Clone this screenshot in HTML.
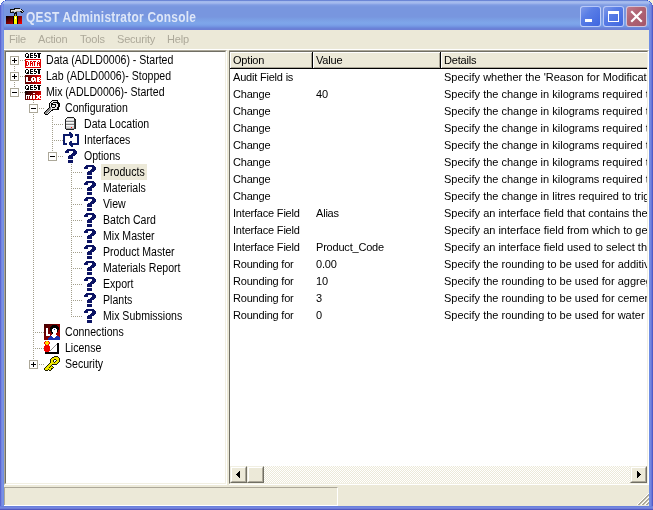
<!DOCTYPE html>
<html><head><meta charset="utf-8"><style>
html,body{margin:0;padding:0;width:653px;height:510px;overflow:hidden;background:#fff;position:relative}
.t{position:absolute;font-family:"Liberation Sans", sans-serif;font-size:11px;letter-spacing:-0.2px;white-space:nowrap;color:#000;line-height:16px}
</style></head><body><div style="position:absolute;left:0;top:0;width:653px;height:510px;will-change:transform">
<div style="position:absolute;left:0px;top:26px;width:4px;height:484px;background:linear-gradient(to right,#5a66d2 0,#5a66d2 1px,#7484e0 1px,#7484e0 2px,#7a90e3 2px,#7a90e3 3px,#6e8de5 3px,#6e8de5 4px)"></div>
<div style="position:absolute;left:649px;top:26px;width:4px;height:484px;background:linear-gradient(to left,#4f5cc8 0,#4f5cc8 1px,#6a78d8 1px,#6a78d8 2px,#7488e0 2px,#7488e0 3px,#6e8de5 3px,#6e8de5 4px)"></div>
<div style="position:absolute;left:0px;top:506px;width:653px;height:4px;background:linear-gradient(to top,#5058c0 0,#5058c0 1px,#6f7dd8 1px,#6f7dd8 2px,#7487e0 2px,#7487e0 3px,#6a80dc 3px,#6a80dc 4px)"></div>
<div style="position:absolute;left:0;top:0;width:653px;height:30px;background:linear-gradient(to bottom,#6b86d6 0,#6b86d6 1px,#a0b7ec 1px,#a6bcee 3px,#90a9e8 4px,#809de3 5px,#7896df 7px,#7896df 17px,#7a9de3 19px,#7ea6ea 23px,#7aa0e8 25px,#7090e0 27px,#6a84d8 28px,#6c7cd4 30px);overflow:hidden"><div style="position:absolute;left:0;top:0;width:4px;height:30px;background:linear-gradient(to right,rgba(80,90,200,.5),rgba(80,90,200,0))"></div><div style="position:absolute;right:0;top:0;width:4px;height:30px;background:linear-gradient(to left,rgba(70,80,190,.6),rgba(70,80,190,0))"></div></div>
<div style="position:absolute;left:0px;top:4px;width:4px;height:26px;background:linear-gradient(to right,#5a66d2 0,#5a66d2 1px,#7484e0 1px,#7484e0 2px,#7a90e3 2px,#7a90e3 3px,#6e8de5 3px,#6e8de5 4px)"></div>
<div style="position:absolute;left:649px;top:4px;width:4px;height:26px;background:linear-gradient(to left,#4f5cc8 0,#4f5cc8 1px,#6a78d8 1px,#6a78d8 2px,#7488e0 2px,#7488e0 3px,#6e8de5 3px,#6e8de5 4px)"></div>
<div style="position:absolute;left:0px;top:0px;width:5px;height:1px;background:#fff"></div>
<div style="position:absolute;left:648px;top:0px;width:5px;height:1px;background:#f2efdc"></div>
<div style="position:absolute;left:0px;top:1px;width:3px;height:1px;background:#fff"></div>
<div style="position:absolute;left:650px;top:1px;width:3px;height:1px;background:#f2efdc"></div>
<div style="position:absolute;left:0px;top:2px;width:2px;height:1px;background:#fff"></div>
<div style="position:absolute;left:651px;top:2px;width:2px;height:1px;background:#f2efdc"></div>
<div style="position:absolute;left:0px;top:3px;width:1px;height:1px;background:#fff"></div>
<div style="position:absolute;left:652px;top:3px;width:1px;height:1px;background:#f2efdc"></div>
<div style="position:absolute;left:0px;top:4px;width:1px;height:1px;background:#fff"></div>
<div style="position:absolute;left:652px;top:4px;width:1px;height:1px;background:#f2efdc"></div>
<div style="position:absolute;left:5px;top:0px;width:1px;height:1px;background:#3050d0"></div>
<div style="position:absolute;left:3px;top:1px;width:1px;height:1px;background:#3a58d8"></div>
<div style="position:absolute;left:2px;top:2px;width:1px;height:1px;background:#4a64d8"></div>
<div style="position:absolute;left:1px;top:3px;width:1px;height:1px;background:#4a64d8"></div>
<div style="position:absolute;left:647px;top:0px;width:1px;height:1px;background:#3050d0"></div>
<div style="position:absolute;left:649px;top:1px;width:1px;height:1px;background:#3a58d8"></div>
<div style="position:absolute;left:650px;top:2px;width:1px;height:1px;background:#4a64d8"></div>
<div style="position:absolute;left:651px;top:3px;width:1px;height:1px;background:#4a64d8"></div>
<svg style="position:absolute;left:0;top:0" width="32" height="30" viewBox="0 0 32 30" shape-rendering="crispEdges"><defs><linearGradient id="tb" x1="0" y1="0" x2="1" y2="1"><stop offset="0" stop-color="#000000"/><stop offset="0.5" stop-color="#800000"/><stop offset="1" stop-color="#ff0000"/></linearGradient></defs><rect x="6" y="16" width="16" height="8" fill="url(#tb)"/><rect x="13" y="16" width="5" height="8" fill="#000"/><rect x="14" y="16" width="3" height="8" fill="#ffff00"/><rect x="15" y="17" width="1" height="2" fill="#fff"/><g fill="#101010"><rect x="14" y="8" width="6" height="1"/><rect x="10" y="9" width="5" height="1"/><rect x="21" y="9" width="1" height="1"/><rect x="10" y="10" width="1" height="1"/><rect x="22" y="10" width="1" height="1"/><rect x="10" y="11" width="1" height="1"/><rect x="20" y="11" width="2" height="1"/><rect x="23" y="11" width="1" height="1"/><rect x="10" y="12" width="4" height="1"/><rect x="15" y="12" width="2" height="1"/><rect x="21" y="12" width="2" height="1"/><rect x="14" y="13" width="3" height="1"/><rect x="14" y="14" width="1" height="1"/><rect x="16" y="14" width="1" height="1"/><rect x="14" y="15" width="1" height="1"/><rect x="16" y="15" width="1" height="1"/></g><g fill="#e0e0e0"><rect x="15" y="9" width="6" height="1"/><rect x="11" y="10" width="11" height="1"/><rect x="11" y="11" width="1" height="1"/><rect x="14" y="11" width="2" height="1"/><rect x="22" y="11" width="1" height="1"/></g><g fill="#909090"><rect x="12" y="11" width="2" height="1"/><rect x="16" y="11" width="4" height="1"/><rect x="15" y="14" width="1" height="1"/><rect x="15" y="15" width="1" height="1"/></g></svg>
<div class="t" style="left:26px;top:8px;font-weight:bold;font-size:14px;letter-spacing:0.3px;color:#dde6f8;line-height:18px;transform:scaleX(0.85);transform-origin:0 0">QEST Administrator Console</div>
<div style="position:absolute;left:580px;top:6px;width:19px;height:19px;border:1px solid rgba(220,230,255,.75);border-radius:3px;background:linear-gradient(135deg,#7f9ae8 0,#5a7ee6 35%,#3f66e0 100%)"></div>
<div style="position:absolute;left:603px;top:6px;width:19px;height:19px;border:1px solid rgba(220,230,255,.75);border-radius:3px;background:linear-gradient(135deg,#7f9ae8 0,#5a7ee6 35%,#3f66e0 100%)"></div>
<div style="position:absolute;left:626px;top:6px;width:19px;height:19px;border:1px solid rgba(220,230,255,.75);border-radius:3px;background:linear-gradient(135deg,#c07a8c 0,#b06474 40%,#a4566a 100%)"></div>
<div style="position:absolute;left:585px;top:19px;width:7px;height:3px;background:#fff"></div>
<div style="position:absolute;left:608px;top:11px;width:9px;height:7px;border:1px solid #fff;border-top-width:3px;"></div>
<svg style="position:absolute;left:626px;top:6px" width="21" height="21"><path d="M6 6 L15 15 M15 6 L6 15" stroke="#fff" stroke-width="2.2" stroke-linecap="square"/></svg>
<div style="position:absolute;left:4px;top:30px;width:645px;height:476px;background:#ece9d8"></div>
<div class="t" style="left:9px;top:33px;color:#aca899;line-height:13px">File</div>
<div class="t" style="left:38px;top:33px;color:#aca899;line-height:13px">Action</div>
<div class="t" style="left:80px;top:33px;color:#aca899;line-height:13px">Tools</div>
<div class="t" style="left:117px;top:33px;color:#aca899;line-height:13px">Security</div>
<div class="t" style="left:167px;top:33px;color:#aca899;line-height:13px">Help</div>
<div style="position:absolute;left:4px;top:49px;width:645px;height:1px;background:#fff"></div>
<div style="position:absolute;left:4px;top:50px;width:221px;height:433px;border:1px solid;border-color:#aca899 #fff #fff #aca899;"><div style="position:absolute;left:0;top:0;width:219px;height:431px;border:1px solid;border-color:#716f64 #f1efe2 #f1efe2 #716f64;background:#fff;overflow:hidden"></div></div>
<div style="position:absolute;left:228px;top:50px;width:419px;height:433px;border:1px solid;border-color:#aca899 #fff #fff #aca899;"><div style="position:absolute;left:0;top:0;width:417px;height:431px;border:1px solid;border-color:#716f64 #f1efe2 #f1efe2 #716f64;background:#fff;overflow:hidden"></div></div>
<div style="position:absolute;left:228px;top:50px;width:1px;height:435px;background:#ece9d8"></div>
<svg style="position:absolute;left:0;top:0" width="653" height="510" shape-rendering="crispEdges"><g fill="#a39f8c"><rect x="20" y="60" width="1" height="1"/><rect x="22" y="60" width="1" height="1"/><rect x="24" y="60" width="1" height="1"/><rect x="14" y="66" width="1" height="1"/><rect x="20" y="76" width="1" height="1"/><rect x="22" y="76" width="1" height="1"/><rect x="24" y="76" width="1" height="1"/><rect x="14" y="68" width="1" height="1"/><rect x="14" y="70" width="1" height="1"/><rect x="14" y="82" width="1" height="1"/><rect x="20" y="92" width="1" height="1"/><rect x="22" y="92" width="1" height="1"/><rect x="24" y="92" width="1" height="1"/><rect x="14" y="84" width="1" height="1"/><rect x="14" y="86" width="1" height="1"/><rect x="39" y="108" width="1" height="1"/><rect x="41" y="108" width="1" height="1"/><rect x="43" y="108" width="1" height="1"/><rect x="33" y="100" width="1" height="1"/><rect x="33" y="102" width="1" height="1"/><rect x="33" y="114" width="1" height="1"/><rect x="54" y="124" width="1" height="1"/><rect x="56" y="124" width="1" height="1"/><rect x="58" y="124" width="1" height="1"/><rect x="60" y="124" width="1" height="1"/><rect x="62" y="124" width="1" height="1"/><rect x="52" y="116" width="1" height="1"/><rect x="52" y="118" width="1" height="1"/><rect x="52" y="120" width="1" height="1"/><rect x="52" y="122" width="1" height="1"/><rect x="52" y="124" width="1" height="1"/><rect x="52" y="126" width="1" height="1"/><rect x="52" y="128" width="1" height="1"/><rect x="52" y="130" width="1" height="1"/><rect x="33" y="116" width="1" height="1"/><rect x="33" y="118" width="1" height="1"/><rect x="33" y="120" width="1" height="1"/><rect x="33" y="122" width="1" height="1"/><rect x="33" y="124" width="1" height="1"/><rect x="33" y="126" width="1" height="1"/><rect x="33" y="128" width="1" height="1"/><rect x="33" y="130" width="1" height="1"/><rect x="54" y="140" width="1" height="1"/><rect x="56" y="140" width="1" height="1"/><rect x="58" y="140" width="1" height="1"/><rect x="60" y="140" width="1" height="1"/><rect x="62" y="140" width="1" height="1"/><rect x="52" y="132" width="1" height="1"/><rect x="52" y="134" width="1" height="1"/><rect x="52" y="136" width="1" height="1"/><rect x="52" y="138" width="1" height="1"/><rect x="52" y="140" width="1" height="1"/><rect x="52" y="142" width="1" height="1"/><rect x="52" y="144" width="1" height="1"/><rect x="52" y="146" width="1" height="1"/><rect x="33" y="132" width="1" height="1"/><rect x="33" y="134" width="1" height="1"/><rect x="33" y="136" width="1" height="1"/><rect x="33" y="138" width="1" height="1"/><rect x="33" y="140" width="1" height="1"/><rect x="33" y="142" width="1" height="1"/><rect x="33" y="144" width="1" height="1"/><rect x="33" y="146" width="1" height="1"/><rect x="58" y="156" width="1" height="1"/><rect x="60" y="156" width="1" height="1"/><rect x="62" y="156" width="1" height="1"/><rect x="52" y="148" width="1" height="1"/><rect x="52" y="150" width="1" height="1"/><rect x="33" y="148" width="1" height="1"/><rect x="33" y="150" width="1" height="1"/><rect x="33" y="152" width="1" height="1"/><rect x="33" y="154" width="1" height="1"/><rect x="33" y="156" width="1" height="1"/><rect x="33" y="158" width="1" height="1"/><rect x="33" y="160" width="1" height="1"/><rect x="33" y="162" width="1" height="1"/><rect x="73" y="172" width="1" height="1"/><rect x="75" y="172" width="1" height="1"/><rect x="77" y="172" width="1" height="1"/><rect x="79" y="172" width="1" height="1"/><rect x="81" y="172" width="1" height="1"/><rect x="71" y="164" width="1" height="1"/><rect x="71" y="166" width="1" height="1"/><rect x="71" y="168" width="1" height="1"/><rect x="71" y="170" width="1" height="1"/><rect x="71" y="172" width="1" height="1"/><rect x="71" y="174" width="1" height="1"/><rect x="71" y="176" width="1" height="1"/><rect x="71" y="178" width="1" height="1"/><rect x="33" y="164" width="1" height="1"/><rect x="33" y="166" width="1" height="1"/><rect x="33" y="168" width="1" height="1"/><rect x="33" y="170" width="1" height="1"/><rect x="33" y="172" width="1" height="1"/><rect x="33" y="174" width="1" height="1"/><rect x="33" y="176" width="1" height="1"/><rect x="33" y="178" width="1" height="1"/><rect x="73" y="188" width="1" height="1"/><rect x="75" y="188" width="1" height="1"/><rect x="77" y="188" width="1" height="1"/><rect x="79" y="188" width="1" height="1"/><rect x="81" y="188" width="1" height="1"/><rect x="71" y="180" width="1" height="1"/><rect x="71" y="182" width="1" height="1"/><rect x="71" y="184" width="1" height="1"/><rect x="71" y="186" width="1" height="1"/><rect x="71" y="188" width="1" height="1"/><rect x="71" y="190" width="1" height="1"/><rect x="71" y="192" width="1" height="1"/><rect x="71" y="194" width="1" height="1"/><rect x="33" y="180" width="1" height="1"/><rect x="33" y="182" width="1" height="1"/><rect x="33" y="184" width="1" height="1"/><rect x="33" y="186" width="1" height="1"/><rect x="33" y="188" width="1" height="1"/><rect x="33" y="190" width="1" height="1"/><rect x="33" y="192" width="1" height="1"/><rect x="33" y="194" width="1" height="1"/><rect x="73" y="204" width="1" height="1"/><rect x="75" y="204" width="1" height="1"/><rect x="77" y="204" width="1" height="1"/><rect x="79" y="204" width="1" height="1"/><rect x="81" y="204" width="1" height="1"/><rect x="71" y="196" width="1" height="1"/><rect x="71" y="198" width="1" height="1"/><rect x="71" y="200" width="1" height="1"/><rect x="71" y="202" width="1" height="1"/><rect x="71" y="204" width="1" height="1"/><rect x="71" y="206" width="1" height="1"/><rect x="71" y="208" width="1" height="1"/><rect x="71" y="210" width="1" height="1"/><rect x="33" y="196" width="1" height="1"/><rect x="33" y="198" width="1" height="1"/><rect x="33" y="200" width="1" height="1"/><rect x="33" y="202" width="1" height="1"/><rect x="33" y="204" width="1" height="1"/><rect x="33" y="206" width="1" height="1"/><rect x="33" y="208" width="1" height="1"/><rect x="33" y="210" width="1" height="1"/><rect x="73" y="220" width="1" height="1"/><rect x="75" y="220" width="1" height="1"/><rect x="77" y="220" width="1" height="1"/><rect x="79" y="220" width="1" height="1"/><rect x="81" y="220" width="1" height="1"/><rect x="71" y="212" width="1" height="1"/><rect x="71" y="214" width="1" height="1"/><rect x="71" y="216" width="1" height="1"/><rect x="71" y="218" width="1" height="1"/><rect x="71" y="220" width="1" height="1"/><rect x="71" y="222" width="1" height="1"/><rect x="71" y="224" width="1" height="1"/><rect x="71" y="226" width="1" height="1"/><rect x="33" y="212" width="1" height="1"/><rect x="33" y="214" width="1" height="1"/><rect x="33" y="216" width="1" height="1"/><rect x="33" y="218" width="1" height="1"/><rect x="33" y="220" width="1" height="1"/><rect x="33" y="222" width="1" height="1"/><rect x="33" y="224" width="1" height="1"/><rect x="33" y="226" width="1" height="1"/><rect x="73" y="236" width="1" height="1"/><rect x="75" y="236" width="1" height="1"/><rect x="77" y="236" width="1" height="1"/><rect x="79" y="236" width="1" height="1"/><rect x="81" y="236" width="1" height="1"/><rect x="71" y="228" width="1" height="1"/><rect x="71" y="230" width="1" height="1"/><rect x="71" y="232" width="1" height="1"/><rect x="71" y="234" width="1" height="1"/><rect x="71" y="236" width="1" height="1"/><rect x="71" y="238" width="1" height="1"/><rect x="71" y="240" width="1" height="1"/><rect x="71" y="242" width="1" height="1"/><rect x="33" y="228" width="1" height="1"/><rect x="33" y="230" width="1" height="1"/><rect x="33" y="232" width="1" height="1"/><rect x="33" y="234" width="1" height="1"/><rect x="33" y="236" width="1" height="1"/><rect x="33" y="238" width="1" height="1"/><rect x="33" y="240" width="1" height="1"/><rect x="33" y="242" width="1" height="1"/><rect x="73" y="252" width="1" height="1"/><rect x="75" y="252" width="1" height="1"/><rect x="77" y="252" width="1" height="1"/><rect x="79" y="252" width="1" height="1"/><rect x="81" y="252" width="1" height="1"/><rect x="71" y="244" width="1" height="1"/><rect x="71" y="246" width="1" height="1"/><rect x="71" y="248" width="1" height="1"/><rect x="71" y="250" width="1" height="1"/><rect x="71" y="252" width="1" height="1"/><rect x="71" y="254" width="1" height="1"/><rect x="71" y="256" width="1" height="1"/><rect x="71" y="258" width="1" height="1"/><rect x="33" y="244" width="1" height="1"/><rect x="33" y="246" width="1" height="1"/><rect x="33" y="248" width="1" height="1"/><rect x="33" y="250" width="1" height="1"/><rect x="33" y="252" width="1" height="1"/><rect x="33" y="254" width="1" height="1"/><rect x="33" y="256" width="1" height="1"/><rect x="33" y="258" width="1" height="1"/><rect x="73" y="268" width="1" height="1"/><rect x="75" y="268" width="1" height="1"/><rect x="77" y="268" width="1" height="1"/><rect x="79" y="268" width="1" height="1"/><rect x="81" y="268" width="1" height="1"/><rect x="71" y="260" width="1" height="1"/><rect x="71" y="262" width="1" height="1"/><rect x="71" y="264" width="1" height="1"/><rect x="71" y="266" width="1" height="1"/><rect x="71" y="268" width="1" height="1"/><rect x="71" y="270" width="1" height="1"/><rect x="71" y="272" width="1" height="1"/><rect x="71" y="274" width="1" height="1"/><rect x="33" y="260" width="1" height="1"/><rect x="33" y="262" width="1" height="1"/><rect x="33" y="264" width="1" height="1"/><rect x="33" y="266" width="1" height="1"/><rect x="33" y="268" width="1" height="1"/><rect x="33" y="270" width="1" height="1"/><rect x="33" y="272" width="1" height="1"/><rect x="33" y="274" width="1" height="1"/><rect x="73" y="284" width="1" height="1"/><rect x="75" y="284" width="1" height="1"/><rect x="77" y="284" width="1" height="1"/><rect x="79" y="284" width="1" height="1"/><rect x="81" y="284" width="1" height="1"/><rect x="71" y="276" width="1" height="1"/><rect x="71" y="278" width="1" height="1"/><rect x="71" y="280" width="1" height="1"/><rect x="71" y="282" width="1" height="1"/><rect x="71" y="284" width="1" height="1"/><rect x="71" y="286" width="1" height="1"/><rect x="71" y="288" width="1" height="1"/><rect x="71" y="290" width="1" height="1"/><rect x="33" y="276" width="1" height="1"/><rect x="33" y="278" width="1" height="1"/><rect x="33" y="280" width="1" height="1"/><rect x="33" y="282" width="1" height="1"/><rect x="33" y="284" width="1" height="1"/><rect x="33" y="286" width="1" height="1"/><rect x="33" y="288" width="1" height="1"/><rect x="33" y="290" width="1" height="1"/><rect x="73" y="300" width="1" height="1"/><rect x="75" y="300" width="1" height="1"/><rect x="77" y="300" width="1" height="1"/><rect x="79" y="300" width="1" height="1"/><rect x="81" y="300" width="1" height="1"/><rect x="71" y="292" width="1" height="1"/><rect x="71" y="294" width="1" height="1"/><rect x="71" y="296" width="1" height="1"/><rect x="71" y="298" width="1" height="1"/><rect x="71" y="300" width="1" height="1"/><rect x="71" y="302" width="1" height="1"/><rect x="71" y="304" width="1" height="1"/><rect x="71" y="306" width="1" height="1"/><rect x="33" y="292" width="1" height="1"/><rect x="33" y="294" width="1" height="1"/><rect x="33" y="296" width="1" height="1"/><rect x="33" y="298" width="1" height="1"/><rect x="33" y="300" width="1" height="1"/><rect x="33" y="302" width="1" height="1"/><rect x="33" y="304" width="1" height="1"/><rect x="33" y="306" width="1" height="1"/><rect x="73" y="316" width="1" height="1"/><rect x="75" y="316" width="1" height="1"/><rect x="77" y="316" width="1" height="1"/><rect x="79" y="316" width="1" height="1"/><rect x="81" y="316" width="1" height="1"/><rect x="71" y="308" width="1" height="1"/><rect x="71" y="310" width="1" height="1"/><rect x="71" y="312" width="1" height="1"/><rect x="71" y="314" width="1" height="1"/><rect x="71" y="316" width="1" height="1"/><rect x="33" y="308" width="1" height="1"/><rect x="33" y="310" width="1" height="1"/><rect x="33" y="312" width="1" height="1"/><rect x="33" y="314" width="1" height="1"/><rect x="33" y="316" width="1" height="1"/><rect x="33" y="318" width="1" height="1"/><rect x="33" y="320" width="1" height="1"/><rect x="33" y="322" width="1" height="1"/><rect x="35" y="332" width="1" height="1"/><rect x="37" y="332" width="1" height="1"/><rect x="39" y="332" width="1" height="1"/><rect x="41" y="332" width="1" height="1"/><rect x="43" y="332" width="1" height="1"/><rect x="33" y="324" width="1" height="1"/><rect x="33" y="326" width="1" height="1"/><rect x="33" y="328" width="1" height="1"/><rect x="33" y="330" width="1" height="1"/><rect x="33" y="332" width="1" height="1"/><rect x="33" y="334" width="1" height="1"/><rect x="33" y="336" width="1" height="1"/><rect x="33" y="338" width="1" height="1"/><rect x="35" y="348" width="1" height="1"/><rect x="37" y="348" width="1" height="1"/><rect x="39" y="348" width="1" height="1"/><rect x="41" y="348" width="1" height="1"/><rect x="43" y="348" width="1" height="1"/><rect x="33" y="340" width="1" height="1"/><rect x="33" y="342" width="1" height="1"/><rect x="33" y="344" width="1" height="1"/><rect x="33" y="346" width="1" height="1"/><rect x="33" y="348" width="1" height="1"/><rect x="33" y="350" width="1" height="1"/><rect x="33" y="352" width="1" height="1"/><rect x="33" y="354" width="1" height="1"/><rect x="39" y="364" width="1" height="1"/><rect x="41" y="364" width="1" height="1"/><rect x="43" y="364" width="1" height="1"/><rect x="33" y="356" width="1" height="1"/><rect x="33" y="358" width="1" height="1"/></g><rect x="10.5" y="56.5" width="8" height="8" fill="#fff" stroke="#aca899"/><rect x="12" y="60" width="5" height="1" fill="#000"/><rect x="14" y="58" width="1" height="5" fill="#000"/><rect x="10.5" y="72.5" width="8" height="8" fill="#fff" stroke="#aca899"/><rect x="12" y="76" width="5" height="1" fill="#000"/><rect x="14" y="74" width="1" height="5" fill="#000"/><rect x="10.5" y="88.5" width="8" height="8" fill="#fff" stroke="#aca899"/><rect x="12" y="92" width="5" height="1" fill="#000"/><rect x="29.5" y="104.5" width="8" height="8" fill="#fff" stroke="#aca899"/><rect x="31" y="108" width="5" height="1" fill="#000"/><rect x="48.5" y="152.5" width="8" height="8" fill="#fff" stroke="#aca899"/><rect x="50" y="156" width="5" height="1" fill="#000"/><rect x="29.5" y="360.5" width="8" height="8" fill="#fff" stroke="#aca899"/><rect x="31" y="364" width="5" height="1" fill="#000"/><rect x="33" y="362" width="1" height="5" fill="#000"/></svg>
<div style="position:absolute;left:101px;top:164px;width:46px;height:16px;background:#ece9d8"></div>
<svg style="position:absolute;left:25px;top:52px" width="16" height="16" viewBox="0 0 16 16" shape-rendering="crispEdges"><g fill="#000"><rect x="1" y="1" width="2" height="1"/><rect x="5" y="1" width="3" height="1"/><rect x="9" y="1" width="2" height="1"/><rect x="12" y="1" width="4" height="1"/><rect x="0" y="2" width="1" height="1"/><rect x="3" y="2" width="1" height="1"/><rect x="5" y="2" width="1" height="1"/><rect x="9" y="2" width="1" height="1"/><rect x="13" y="2" width="2" height="1"/><rect x="0" y="3" width="1" height="1"/><rect x="3" y="3" width="1" height="1"/><rect x="5" y="3" width="3" height="1"/><rect x="9" y="3" width="3" height="1"/><rect x="13" y="3" width="2" height="1"/><rect x="0" y="4" width="1" height="1"/><rect x="2" y="4" width="2" height="1"/><rect x="5" y="4" width="1" height="1"/><rect x="11" y="4" width="1" height="1"/><rect x="13" y="4" width="2" height="1"/><rect x="1" y="5" width="3" height="1"/><rect x="5" y="5" width="3" height="1"/><rect x="9" y="5" width="2" height="1"/><rect x="13" y="5" width="2" height="1"/></g><g fill="#e00000"><rect x="0" y="7" width="16" height="1"/><rect x="0" y="8" width="1" height="1"/><rect x="15" y="8" width="1" height="1"/><rect x="0" y="9" width="3" height="1"/><rect x="5" y="9" width="2" height="1"/><rect x="8" y="9" width="3" height="1"/><rect x="13" y="9" width="1" height="1"/><rect x="15" y="9" width="1" height="1"/><rect x="0" y="10" width="2" height="1"/><rect x="3" y="10" width="1" height="1"/><rect x="5" y="10" width="1" height="1"/><rect x="7" y="10" width="1" height="1"/><rect x="9" y="10" width="1" height="1"/><rect x="12" y="10" width="1" height="1"/><rect x="14" y="10" width="2" height="1"/><rect x="0" y="11" width="2" height="1"/><rect x="3" y="11" width="1" height="1"/><rect x="5" y="11" width="3" height="1"/><rect x="9" y="11" width="1" height="1"/><rect x="12" y="11" width="4" height="1"/><rect x="0" y="12" width="2" height="1"/><rect x="3" y="12" width="1" height="1"/><rect x="5" y="12" width="1" height="1"/><rect x="7" y="12" width="1" height="1"/><rect x="9" y="12" width="1" height="1"/><rect x="12" y="12" width="1" height="1"/><rect x="14" y="12" width="2" height="1"/><rect x="0" y="13" width="3" height="1"/><rect x="5" y="13" width="1" height="1"/><rect x="7" y="13" width="1" height="1"/><rect x="9" y="13" width="1" height="1"/><rect x="12" y="13" width="1" height="1"/><rect x="14" y="13" width="2" height="1"/><rect x="0" y="14" width="1" height="1"/><rect x="15" y="14" width="1" height="1"/><rect x="0" y="15" width="16" height="1"/></g><g fill="#fff"><rect x="1" y="8" width="14" height="1"/><rect x="3" y="9" width="2" height="1"/><rect x="7" y="9" width="1" height="1"/><rect x="11" y="9" width="2" height="1"/><rect x="14" y="9" width="1" height="1"/><rect x="2" y="10" width="1" height="1"/><rect x="4" y="10" width="1" height="1"/><rect x="6" y="10" width="1" height="1"/><rect x="8" y="10" width="1" height="1"/><rect x="10" y="10" width="2" height="1"/><rect x="13" y="10" width="1" height="1"/><rect x="2" y="11" width="1" height="1"/><rect x="4" y="11" width="1" height="1"/><rect x="8" y="11" width="1" height="1"/><rect x="10" y="11" width="2" height="1"/><rect x="2" y="12" width="1" height="1"/><rect x="4" y="12" width="1" height="1"/><rect x="6" y="12" width="1" height="1"/><rect x="8" y="12" width="1" height="1"/><rect x="10" y="12" width="2" height="1"/><rect x="13" y="12" width="1" height="1"/><rect x="3" y="13" width="2" height="1"/><rect x="6" y="13" width="1" height="1"/><rect x="8" y="13" width="1" height="1"/><rect x="10" y="13" width="2" height="1"/><rect x="13" y="13" width="1" height="1"/><rect x="1" y="14" width="14" height="1"/></g></svg>
<div class="t" style="left:46px;top:52px;font-size:12px;letter-spacing:0;transform:scaleX(0.88);transform-origin:0 0">Data (ADLD0006) - Started</div>
<svg style="position:absolute;left:25px;top:68px" width="16" height="16" viewBox="0 0 16 16" shape-rendering="crispEdges"><g fill="#000"><rect x="1" y="1" width="2" height="1"/><rect x="5" y="1" width="3" height="1"/><rect x="9" y="1" width="2" height="1"/><rect x="12" y="1" width="4" height="1"/><rect x="0" y="2" width="1" height="1"/><rect x="3" y="2" width="1" height="1"/><rect x="5" y="2" width="1" height="1"/><rect x="9" y="2" width="1" height="1"/><rect x="13" y="2" width="2" height="1"/><rect x="0" y="3" width="1" height="1"/><rect x="3" y="3" width="1" height="1"/><rect x="5" y="3" width="3" height="1"/><rect x="9" y="3" width="3" height="1"/><rect x="13" y="3" width="2" height="1"/><rect x="0" y="4" width="1" height="1"/><rect x="2" y="4" width="2" height="1"/><rect x="5" y="4" width="1" height="1"/><rect x="11" y="4" width="1" height="1"/><rect x="13" y="4" width="2" height="1"/><rect x="1" y="5" width="3" height="1"/><rect x="5" y="5" width="3" height="1"/><rect x="9" y="5" width="2" height="1"/><rect x="13" y="5" width="2" height="1"/></g><defs><linearGradient id="glab" x1="0" x2="1"><stop offset="0" stop-color="#500000"/><stop offset="1" stop-color="#f00000"/></linearGradient></defs><rect x="0" y="7" width="16" height="9" fill="url(#glab)"/><g fill="#fff"><rect x="1" y="9" width="2" height="1"/><rect x="7" y="9" width="3" height="1"/><rect x="12" y="9" width="3" height="1"/><rect x="1" y="10" width="2" height="1"/><rect x="6" y="10" width="2" height="1"/><rect x="9" y="10" width="2" height="1"/><rect x="12" y="10" width="2" height="1"/><rect x="15" y="10" width="1" height="1"/><rect x="1" y="11" width="2" height="1"/><rect x="6" y="11" width="2" height="1"/><rect x="9" y="11" width="2" height="1"/><rect x="12" y="11" width="3" height="1"/><rect x="1" y="12" width="2" height="1"/><rect x="6" y="12" width="5" height="1"/><rect x="12" y="12" width="2" height="1"/><rect x="15" y="12" width="1" height="1"/><rect x="1" y="13" width="5" height="1"/><rect x="7" y="13" width="2" height="1"/><rect x="10" y="13" width="1" height="1"/><rect x="12" y="13" width="3" height="1"/></g></svg>
<div class="t" style="left:46px;top:68px;font-size:12px;letter-spacing:0;transform:scaleX(0.88);transform-origin:0 0">Lab (ADLD0006)- Stopped</div>
<svg style="position:absolute;left:25px;top:84px" width="16" height="16" viewBox="0 0 16 16" shape-rendering="crispEdges"><g fill="#000"><rect x="1" y="1" width="2" height="1"/><rect x="5" y="1" width="3" height="1"/><rect x="9" y="1" width="2" height="1"/><rect x="12" y="1" width="4" height="1"/><rect x="0" y="2" width="1" height="1"/><rect x="3" y="2" width="1" height="1"/><rect x="5" y="2" width="1" height="1"/><rect x="9" y="2" width="1" height="1"/><rect x="13" y="2" width="2" height="1"/><rect x="0" y="3" width="1" height="1"/><rect x="3" y="3" width="1" height="1"/><rect x="5" y="3" width="3" height="1"/><rect x="9" y="3" width="3" height="1"/><rect x="13" y="3" width="2" height="1"/><rect x="0" y="4" width="1" height="1"/><rect x="2" y="4" width="2" height="1"/><rect x="5" y="4" width="1" height="1"/><rect x="11" y="4" width="1" height="1"/><rect x="13" y="4" width="2" height="1"/><rect x="1" y="5" width="3" height="1"/><rect x="5" y="5" width="3" height="1"/><rect x="9" y="5" width="2" height="1"/><rect x="13" y="5" width="2" height="1"/></g><defs><linearGradient id="gmix" x1="0" x2="1" y1="0" y2="0.5"><stop offset="0" stop-color="#000"/><stop offset="1" stop-color="#f00000"/></linearGradient></defs><rect x="0" y="7" width="16" height="9" fill="url(#gmix)"/><g fill="#fff"><rect x="8" y="9" width="2" height="1"/><rect x="1" y="11" width="4" height="1"/><rect x="6" y="11" width="1" height="1"/><rect x="8" y="11" width="2" height="1"/><rect x="11" y="11" width="2" height="1"/><rect x="14" y="11" width="2" height="1"/><rect x="1" y="12" width="1" height="1"/><rect x="3" y="12" width="1" height="1"/><rect x="5" y="12" width="2" height="1"/><rect x="8" y="12" width="2" height="1"/><rect x="12" y="12" width="3" height="1"/><rect x="1" y="13" width="1" height="1"/><rect x="3" y="13" width="1" height="1"/><rect x="5" y="13" width="2" height="1"/><rect x="8" y="13" width="2" height="1"/><rect x="12" y="13" width="3" height="1"/><rect x="1" y="14" width="1" height="1"/><rect x="3" y="14" width="1" height="1"/><rect x="5" y="14" width="2" height="1"/><rect x="8" y="14" width="2" height="1"/><rect x="11" y="14" width="2" height="1"/><rect x="14" y="14" width="2" height="1"/></g></svg>
<div class="t" style="left:46px;top:84px;font-size:12px;letter-spacing:0;transform:scaleX(0.88);transform-origin:0 0">Mix (ADLD0006)- Started</div>
<svg style="position:absolute;left:44px;top:100px" width="16" height="16" viewBox="0 0 16 16" shape-rendering="crispEdges"><g fill="#000"><rect x="8" y="0" width="6" height="1"/><rect x="7" y="1" width="1" height="1"/><rect x="13" y="1" width="1" height="1"/><rect x="6" y="2" width="1" height="1"/><rect x="9" y="2" width="6" height="1"/><rect x="5" y="3" width="1" height="1"/><rect x="7" y="3" width="2" height="1"/><rect x="13" y="3" width="3" height="1"/><rect x="5" y="4" width="1" height="1"/><rect x="7" y="4" width="5" height="1"/><rect x="14" y="4" width="2" height="1"/><rect x="5" y="5" width="1" height="1"/><rect x="7" y="5" width="1" height="1"/><rect x="11" y="5" width="1" height="1"/><rect x="14" y="5" width="2" height="1"/><rect x="5" y="6" width="1" height="1"/><rect x="7" y="6" width="1" height="1"/><rect x="11" y="6" width="1" height="1"/><rect x="14" y="6" width="2" height="1"/><rect x="5" y="7" width="1" height="1"/><rect x="8" y="7" width="3" height="1"/><rect x="13" y="7" width="2" height="1"/><rect x="4" y="8" width="1" height="1"/><rect x="13" y="8" width="2" height="1"/><rect x="3" y="9" width="1" height="1"/><rect x="8" y="9" width="7" height="1"/><rect x="2" y="10" width="1" height="1"/><rect x="7" y="10" width="2" height="1"/><rect x="1" y="11" width="1" height="1"/><rect x="6" y="11" width="1" height="1"/><rect x="0" y="12" width="1" height="1"/><rect x="5" y="12" width="1" height="1"/><rect x="0" y="13" width="1" height="1"/><rect x="4" y="13" width="1" height="1"/><rect x="1" y="14" width="3" height="1"/></g><g fill="#e8e8e8"><rect x="8" y="1" width="5" height="1"/><rect x="7" y="2" width="2" height="1"/><rect x="6" y="3" width="1" height="1"/><rect x="9" y="3" width="4" height="1"/><rect x="6" y="4" width="1" height="1"/><rect x="12" y="4" width="2" height="1"/><rect x="6" y="5" width="1" height="1"/><rect x="8" y="5" width="3" height="1"/><rect x="12" y="5" width="2" height="1"/><rect x="6" y="6" width="1" height="1"/><rect x="8" y="6" width="3" height="1"/><rect x="12" y="6" width="2" height="1"/><rect x="7" y="7" width="1" height="1"/><rect x="11" y="7" width="2" height="1"/><rect x="7" y="8" width="6" height="1"/><rect x="7" y="9" width="1" height="1"/><rect x="6" y="10" width="1" height="1"/><rect x="5" y="11" width="1" height="1"/><rect x="4" y="12" width="1" height="1"/><rect x="3" y="13" width="1" height="1"/></g><g fill="#8c8c8c"><rect x="6" y="7" width="1" height="1"/><rect x="5" y="8" width="2" height="1"/><rect x="4" y="9" width="3" height="1"/><rect x="3" y="10" width="3" height="1"/><rect x="2" y="11" width="3" height="1"/><rect x="1" y="12" width="3" height="1"/><rect x="1" y="13" width="2" height="1"/></g></svg>
<div class="t" style="left:65px;top:100px;font-size:12px;letter-spacing:0;transform:scaleX(0.88);transform-origin:0 0">Configuration</div>
<svg style="position:absolute;left:63px;top:116px" width="16" height="16" viewBox="0 0 16 16" shape-rendering="crispEdges"><g fill="#202020"><rect x="4" y="1" width="7" height="1"/><rect x="3" y="2" width="1" height="1"/><rect x="11" y="2" width="1" height="1"/><rect x="2" y="3" width="1" height="1"/><rect x="11" y="3" width="2" height="1"/><rect x="2" y="4" width="1" height="1"/><rect x="12" y="4" width="1" height="1"/><rect x="2" y="5" width="1" height="1"/><rect x="12" y="5" width="1" height="1"/><rect x="2" y="6" width="1" height="1"/><rect x="12" y="6" width="1" height="1"/><rect x="2" y="7" width="1" height="1"/><rect x="12" y="7" width="1" height="1"/><rect x="2" y="8" width="1" height="1"/><rect x="12" y="8" width="1" height="1"/><rect x="2" y="9" width="1" height="1"/><rect x="12" y="9" width="1" height="1"/><rect x="2" y="10" width="1" height="1"/><rect x="12" y="10" width="1" height="1"/><rect x="2" y="11" width="1" height="1"/><rect x="12" y="11" width="1" height="1"/><rect x="2" y="12" width="1" height="1"/><rect x="12" y="12" width="1" height="1"/><rect x="3" y="13" width="8" height="1"/></g><g fill="#d8d8d8"><rect x="4" y="2" width="7" height="1"/><rect x="3" y="4" width="8" height="1"/><rect x="3" y="7" width="8" height="1"/><rect x="3" y="10" width="8" height="1"/><rect x="3" y="11" width="5" height="1"/><rect x="9" y="11" width="2" height="1"/></g><g fill="#f8f8f8"><rect x="3" y="3" width="8" height="1"/><rect x="3" y="6" width="8" height="1"/><rect x="3" y="9" width="8" height="1"/></g><g fill="#404040"><rect x="11" y="4" width="1" height="1"/><rect x="11" y="5" width="1" height="1"/><rect x="11" y="6" width="1" height="1"/><rect x="11" y="7" width="1" height="1"/><rect x="11" y="8" width="1" height="1"/><rect x="11" y="9" width="1" height="1"/><rect x="11" y="10" width="1" height="1"/><rect x="11" y="11" width="1" height="1"/><rect x="11" y="12" width="1" height="1"/></g><g fill="#808080"><rect x="3" y="5" width="8" height="1"/><rect x="3" y="8" width="8" height="1"/></g><g fill="#ff0000"><rect x="8" y="11" width="1" height="1"/></g><g fill="#a0a0a0"><rect x="3" y="12" width="8" height="1"/></g></svg>
<div class="t" style="left:84px;top:116px;font-size:12px;letter-spacing:0;transform:scaleX(0.88);transform-origin:0 0">Data Location</div>
<svg style="position:absolute;left:63px;top:132px" width="16" height="16" viewBox="0 0 16 16" shape-rendering="crispEdges"><g fill="#0c1a6a"><rect x="6" y="0" width="2" height="1"/><rect x="6" y="1" width="3" height="1"/><rect x="0" y="2" width="10" height="1"/><rect x="12" y="2" width="4" height="1"/><rect x="0" y="3" width="10" height="1"/><rect x="12" y="3" width="4" height="1"/><rect x="0" y="4" width="2" height="1"/><rect x="7" y="4" width="3" height="1"/><rect x="14" y="4" width="2" height="1"/><rect x="0" y="5" width="2" height="1"/><rect x="7" y="5" width="2" height="1"/><rect x="14" y="5" width="2" height="1"/><rect x="0" y="6" width="2" height="1"/><rect x="14" y="6" width="2" height="1"/><rect x="0" y="7" width="2" height="1"/><rect x="14" y="7" width="2" height="1"/><rect x="0" y="8" width="2" height="1"/><rect x="14" y="8" width="2" height="1"/><rect x="0" y="9" width="2" height="1"/><rect x="7" y="9" width="2" height="1"/><rect x="14" y="9" width="2" height="1"/><rect x="0" y="10" width="2" height="1"/><rect x="6" y="10" width="3" height="1"/><rect x="14" y="10" width="2" height="1"/><rect x="0" y="11" width="4" height="1"/><rect x="6" y="11" width="10" height="1"/><rect x="0" y="12" width="4" height="1"/><rect x="6" y="12" width="10" height="1"/><rect x="7" y="13" width="3" height="1"/><rect x="8" y="14" width="2" height="1"/></g></svg>
<div class="t" style="left:84px;top:132px;font-size:12px;letter-spacing:0;transform:scaleX(0.88);transform-origin:0 0">Interfaces</div>
<svg style="position:absolute;left:63px;top:148px" width="16" height="16" viewBox="0 0 16 16" shape-rendering="crispEdges"><g fill="#0c1464"><rect x="4" y="1" width="8" height="1"/><rect x="3" y="2" width="10" height="1"/><rect x="2" y="3" width="4" height="1"/><rect x="10" y="3" width="4" height="1"/><rect x="2" y="4" width="4" height="1"/><rect x="10" y="4" width="4" height="1"/><rect x="9" y="5" width="5" height="1"/><rect x="8" y="6" width="5" height="1"/><rect x="6" y="7" width="6" height="1"/><rect x="5" y="8" width="5" height="1"/><rect x="5" y="9" width="5" height="1"/><rect x="5" y="10" width="5" height="1"/><rect x="5" y="12" width="5" height="1"/><rect x="5" y="13" width="5" height="1"/><rect x="5" y="14" width="5" height="1"/></g></svg>
<div class="t" style="left:84px;top:148px;font-size:12px;letter-spacing:0;transform:scaleX(0.88);transform-origin:0 0">Options</div>
<svg style="position:absolute;left:82px;top:164px" width="16" height="16" viewBox="0 0 16 16" shape-rendering="crispEdges"><g fill="#0c1464"><rect x="4" y="1" width="8" height="1"/><rect x="3" y="2" width="10" height="1"/><rect x="2" y="3" width="4" height="1"/><rect x="10" y="3" width="4" height="1"/><rect x="2" y="4" width="4" height="1"/><rect x="10" y="4" width="4" height="1"/><rect x="9" y="5" width="5" height="1"/><rect x="8" y="6" width="5" height="1"/><rect x="6" y="7" width="6" height="1"/><rect x="5" y="8" width="5" height="1"/><rect x="5" y="9" width="5" height="1"/><rect x="5" y="10" width="5" height="1"/><rect x="5" y="12" width="5" height="1"/><rect x="5" y="13" width="5" height="1"/><rect x="5" y="14" width="5" height="1"/></g></svg>
<div class="t" style="left:103px;top:164px;font-size:12px;letter-spacing:0;transform:scaleX(0.88);transform-origin:0 0">Products</div>
<svg style="position:absolute;left:82px;top:180px" width="16" height="16" viewBox="0 0 16 16" shape-rendering="crispEdges"><g fill="#0c1464"><rect x="4" y="1" width="8" height="1"/><rect x="3" y="2" width="10" height="1"/><rect x="2" y="3" width="4" height="1"/><rect x="10" y="3" width="4" height="1"/><rect x="2" y="4" width="4" height="1"/><rect x="10" y="4" width="4" height="1"/><rect x="9" y="5" width="5" height="1"/><rect x="8" y="6" width="5" height="1"/><rect x="6" y="7" width="6" height="1"/><rect x="5" y="8" width="5" height="1"/><rect x="5" y="9" width="5" height="1"/><rect x="5" y="10" width="5" height="1"/><rect x="5" y="12" width="5" height="1"/><rect x="5" y="13" width="5" height="1"/><rect x="5" y="14" width="5" height="1"/></g></svg>
<div class="t" style="left:103px;top:180px;font-size:12px;letter-spacing:0;transform:scaleX(0.88);transform-origin:0 0">Materials</div>
<svg style="position:absolute;left:82px;top:196px" width="16" height="16" viewBox="0 0 16 16" shape-rendering="crispEdges"><g fill="#0c1464"><rect x="4" y="1" width="8" height="1"/><rect x="3" y="2" width="10" height="1"/><rect x="2" y="3" width="4" height="1"/><rect x="10" y="3" width="4" height="1"/><rect x="2" y="4" width="4" height="1"/><rect x="10" y="4" width="4" height="1"/><rect x="9" y="5" width="5" height="1"/><rect x="8" y="6" width="5" height="1"/><rect x="6" y="7" width="6" height="1"/><rect x="5" y="8" width="5" height="1"/><rect x="5" y="9" width="5" height="1"/><rect x="5" y="10" width="5" height="1"/><rect x="5" y="12" width="5" height="1"/><rect x="5" y="13" width="5" height="1"/><rect x="5" y="14" width="5" height="1"/></g></svg>
<div class="t" style="left:103px;top:196px;font-size:12px;letter-spacing:0;transform:scaleX(0.88);transform-origin:0 0">View</div>
<svg style="position:absolute;left:82px;top:212px" width="16" height="16" viewBox="0 0 16 16" shape-rendering="crispEdges"><g fill="#0c1464"><rect x="4" y="1" width="8" height="1"/><rect x="3" y="2" width="10" height="1"/><rect x="2" y="3" width="4" height="1"/><rect x="10" y="3" width="4" height="1"/><rect x="2" y="4" width="4" height="1"/><rect x="10" y="4" width="4" height="1"/><rect x="9" y="5" width="5" height="1"/><rect x="8" y="6" width="5" height="1"/><rect x="6" y="7" width="6" height="1"/><rect x="5" y="8" width="5" height="1"/><rect x="5" y="9" width="5" height="1"/><rect x="5" y="10" width="5" height="1"/><rect x="5" y="12" width="5" height="1"/><rect x="5" y="13" width="5" height="1"/><rect x="5" y="14" width="5" height="1"/></g></svg>
<div class="t" style="left:103px;top:212px;font-size:12px;letter-spacing:0;transform:scaleX(0.88);transform-origin:0 0">Batch Card</div>
<svg style="position:absolute;left:82px;top:228px" width="16" height="16" viewBox="0 0 16 16" shape-rendering="crispEdges"><g fill="#0c1464"><rect x="4" y="1" width="8" height="1"/><rect x="3" y="2" width="10" height="1"/><rect x="2" y="3" width="4" height="1"/><rect x="10" y="3" width="4" height="1"/><rect x="2" y="4" width="4" height="1"/><rect x="10" y="4" width="4" height="1"/><rect x="9" y="5" width="5" height="1"/><rect x="8" y="6" width="5" height="1"/><rect x="6" y="7" width="6" height="1"/><rect x="5" y="8" width="5" height="1"/><rect x="5" y="9" width="5" height="1"/><rect x="5" y="10" width="5" height="1"/><rect x="5" y="12" width="5" height="1"/><rect x="5" y="13" width="5" height="1"/><rect x="5" y="14" width="5" height="1"/></g></svg>
<div class="t" style="left:103px;top:228px;font-size:12px;letter-spacing:0;transform:scaleX(0.88);transform-origin:0 0">Mix Master</div>
<svg style="position:absolute;left:82px;top:244px" width="16" height="16" viewBox="0 0 16 16" shape-rendering="crispEdges"><g fill="#0c1464"><rect x="4" y="1" width="8" height="1"/><rect x="3" y="2" width="10" height="1"/><rect x="2" y="3" width="4" height="1"/><rect x="10" y="3" width="4" height="1"/><rect x="2" y="4" width="4" height="1"/><rect x="10" y="4" width="4" height="1"/><rect x="9" y="5" width="5" height="1"/><rect x="8" y="6" width="5" height="1"/><rect x="6" y="7" width="6" height="1"/><rect x="5" y="8" width="5" height="1"/><rect x="5" y="9" width="5" height="1"/><rect x="5" y="10" width="5" height="1"/><rect x="5" y="12" width="5" height="1"/><rect x="5" y="13" width="5" height="1"/><rect x="5" y="14" width="5" height="1"/></g></svg>
<div class="t" style="left:103px;top:244px;font-size:12px;letter-spacing:0;transform:scaleX(0.88);transform-origin:0 0">Product Master</div>
<svg style="position:absolute;left:82px;top:260px" width="16" height="16" viewBox="0 0 16 16" shape-rendering="crispEdges"><g fill="#0c1464"><rect x="4" y="1" width="8" height="1"/><rect x="3" y="2" width="10" height="1"/><rect x="2" y="3" width="4" height="1"/><rect x="10" y="3" width="4" height="1"/><rect x="2" y="4" width="4" height="1"/><rect x="10" y="4" width="4" height="1"/><rect x="9" y="5" width="5" height="1"/><rect x="8" y="6" width="5" height="1"/><rect x="6" y="7" width="6" height="1"/><rect x="5" y="8" width="5" height="1"/><rect x="5" y="9" width="5" height="1"/><rect x="5" y="10" width="5" height="1"/><rect x="5" y="12" width="5" height="1"/><rect x="5" y="13" width="5" height="1"/><rect x="5" y="14" width="5" height="1"/></g></svg>
<div class="t" style="left:103px;top:260px;font-size:12px;letter-spacing:0;transform:scaleX(0.88);transform-origin:0 0">Materials Report</div>
<svg style="position:absolute;left:82px;top:276px" width="16" height="16" viewBox="0 0 16 16" shape-rendering="crispEdges"><g fill="#0c1464"><rect x="4" y="1" width="8" height="1"/><rect x="3" y="2" width="10" height="1"/><rect x="2" y="3" width="4" height="1"/><rect x="10" y="3" width="4" height="1"/><rect x="2" y="4" width="4" height="1"/><rect x="10" y="4" width="4" height="1"/><rect x="9" y="5" width="5" height="1"/><rect x="8" y="6" width="5" height="1"/><rect x="6" y="7" width="6" height="1"/><rect x="5" y="8" width="5" height="1"/><rect x="5" y="9" width="5" height="1"/><rect x="5" y="10" width="5" height="1"/><rect x="5" y="12" width="5" height="1"/><rect x="5" y="13" width="5" height="1"/><rect x="5" y="14" width="5" height="1"/></g></svg>
<div class="t" style="left:103px;top:276px;font-size:12px;letter-spacing:0;transform:scaleX(0.88);transform-origin:0 0">Export</div>
<svg style="position:absolute;left:82px;top:292px" width="16" height="16" viewBox="0 0 16 16" shape-rendering="crispEdges"><g fill="#0c1464"><rect x="4" y="1" width="8" height="1"/><rect x="3" y="2" width="10" height="1"/><rect x="2" y="3" width="4" height="1"/><rect x="10" y="3" width="4" height="1"/><rect x="2" y="4" width="4" height="1"/><rect x="10" y="4" width="4" height="1"/><rect x="9" y="5" width="5" height="1"/><rect x="8" y="6" width="5" height="1"/><rect x="6" y="7" width="6" height="1"/><rect x="5" y="8" width="5" height="1"/><rect x="5" y="9" width="5" height="1"/><rect x="5" y="10" width="5" height="1"/><rect x="5" y="12" width="5" height="1"/><rect x="5" y="13" width="5" height="1"/><rect x="5" y="14" width="5" height="1"/></g></svg>
<div class="t" style="left:103px;top:292px;font-size:12px;letter-spacing:0;transform:scaleX(0.88);transform-origin:0 0">Plants</div>
<svg style="position:absolute;left:82px;top:308px" width="16" height="16" viewBox="0 0 16 16" shape-rendering="crispEdges"><g fill="#0c1464"><rect x="4" y="1" width="8" height="1"/><rect x="3" y="2" width="10" height="1"/><rect x="2" y="3" width="4" height="1"/><rect x="10" y="3" width="4" height="1"/><rect x="2" y="4" width="4" height="1"/><rect x="10" y="4" width="4" height="1"/><rect x="9" y="5" width="5" height="1"/><rect x="8" y="6" width="5" height="1"/><rect x="6" y="7" width="6" height="1"/><rect x="5" y="8" width="5" height="1"/><rect x="5" y="9" width="5" height="1"/><rect x="5" y="10" width="5" height="1"/><rect x="5" y="12" width="5" height="1"/><rect x="5" y="13" width="5" height="1"/><rect x="5" y="14" width="5" height="1"/></g></svg>
<div class="t" style="left:103px;top:308px;font-size:12px;letter-spacing:0;transform:scaleX(0.88);transform-origin:0 0">Mix Submissions</div>
<svg style="position:absolute;left:44px;top:324px" width="16" height="16" viewBox="0 0 16 16" shape-rendering="crispEdges"><defs><linearGradient id="gc" x1="0" y1="0" x2="1" y2="1"><stop offset="0" stop-color="#400000"/><stop offset="1" stop-color="#c00000"/></linearGradient></defs><rect x="0" y="0" width="16" height="16" fill="url(#gc)"/><g fill="rgba(0,0,0,0)"><rect x="0" y="0" width="16" height="1"/><rect x="0" y="1" width="8" height="1"/><rect x="13" y="1" width="3" height="1"/><rect x="0" y="2" width="7" height="1"/><rect x="14" y="2" width="2" height="1"/><rect x="0" y="3" width="6" height="1"/><rect x="15" y="3" width="1" height="1"/><rect x="0" y="4" width="2" height="1"/><rect x="4" y="4" width="2" height="1"/><rect x="15" y="4" width="1" height="1"/><rect x="0" y="5" width="2" height="1"/><rect x="4" y="5" width="2" height="1"/><rect x="15" y="5" width="1" height="1"/><rect x="0" y="6" width="2" height="1"/><rect x="4" y="6" width="2" height="1"/><rect x="14" y="6" width="2" height="1"/><rect x="0" y="7" width="2" height="1"/><rect x="4" y="7" width="3" height="1"/><rect x="14" y="7" width="2" height="1"/><rect x="0" y="8" width="2" height="1"/><rect x="4" y="8" width="3" height="1"/><rect x="13" y="8" width="3" height="1"/><rect x="0" y="9" width="2" height="1"/><rect x="4" y="9" width="4" height="1"/><rect x="12" y="9" width="4" height="1"/><rect x="0" y="10" width="2" height="1"/><rect x="6" y="10" width="2" height="1"/><rect x="12" y="10" width="4" height="1"/><rect x="0" y="11" width="2" height="1"/><rect x="6" y="11" width="1" height="1"/><rect x="13" y="11" width="3" height="1"/><rect x="0" y="12" width="6" height="1"/><rect x="15" y="12" width="1" height="1"/><rect x="0" y="13" width="5" height="1"/><rect x="0" y="14" width="4" height="1"/><rect x="0" y="15" width="4" height="1"/></g><g fill="#000"><rect x="8" y="1" width="5" height="1"/><rect x="7" y="2" width="7" height="1"/><rect x="6" y="3" width="9" height="1"/><rect x="6" y="4" width="3" height="1"/><rect x="12" y="4" width="3" height="1"/><rect x="6" y="5" width="2" height="1"/><rect x="13" y="5" width="2" height="1"/><rect x="6" y="6" width="2" height="1"/><rect x="13" y="6" width="1" height="1"/><rect x="7" y="7" width="1" height="1"/><rect x="13" y="7" width="1" height="1"/><rect x="7" y="8" width="2" height="1"/><rect x="8" y="9" width="1" height="1"/></g><g fill="#fff"><rect x="2" y="4" width="2" height="1"/><rect x="9" y="4" width="3" height="1"/><rect x="2" y="5" width="2" height="1"/><rect x="8" y="5" width="2" height="1"/><rect x="11" y="5" width="2" height="1"/><rect x="2" y="6" width="2" height="1"/><rect x="8" y="6" width="5" height="1"/><rect x="2" y="7" width="2" height="1"/><rect x="8" y="7" width="5" height="1"/><rect x="2" y="8" width="2" height="1"/><rect x="9" y="8" width="4" height="1"/><rect x="2" y="9" width="2" height="1"/><rect x="9" y="9" width="3" height="1"/><rect x="2" y="10" width="4" height="1"/><rect x="8" y="10" width="4" height="1"/><rect x="2" y="11" width="4" height="1"/><rect x="7" y="11" width="6" height="1"/><rect x="8" y="12" width="4" height="1"/><rect x="9" y="13" width="2" height="1"/></g><g fill="#1830b0"><rect x="10" y="5" width="1" height="1"/><rect x="6" y="12" width="2" height="1"/><rect x="12" y="12" width="3" height="1"/><rect x="5" y="13" width="4" height="1"/><rect x="11" y="13" width="5" height="1"/><rect x="4" y="14" width="12" height="1"/><rect x="4" y="15" width="12" height="1"/></g></svg>
<div class="t" style="left:65px;top:324px;font-size:12px;letter-spacing:0;transform:scaleX(0.88);transform-origin:0 0">Connections</div>
<svg style="position:absolute;left:44px;top:340px" width="16" height="16" viewBox="0 0 16 16" shape-rendering="crispEdges"><g fill="#f00000"><rect x="1" y="1" width="1" height="1"/><rect x="4" y="1" width="1" height="1"/><rect x="0" y="2" width="1" height="1"/><rect x="5" y="2" width="1" height="1"/><rect x="0" y="3" width="1" height="1"/><rect x="5" y="3" width="1" height="1"/><rect x="1" y="4" width="1" height="1"/><rect x="4" y="4" width="1" height="1"/><rect x="1" y="5" width="4" height="1"/><rect x="0" y="6" width="6" height="1"/><rect x="0" y="7" width="6" height="1"/><rect x="0" y="8" width="6" height="1"/><rect x="0" y="9" width="6" height="1"/><rect x="0" y="10" width="6" height="1"/><rect x="1" y="11" width="4" height="1"/></g><g fill="#ffd800"><rect x="2" y="1" width="2" height="1"/><rect x="1" y="2" width="4" height="1"/><rect x="1" y="3" width="4" height="1"/><rect x="2" y="4" width="2" height="1"/></g><g fill="#000"><rect x="13" y="3" width="2" height="1"/><rect x="13" y="4" width="2" height="1"/><rect x="13" y="5" width="2" height="1"/><rect x="13" y="6" width="2" height="1"/><rect x="13" y="7" width="2" height="1"/><rect x="13" y="8" width="2" height="1"/><rect x="13" y="9" width="2" height="1"/><rect x="13" y="10" width="2" height="1"/><rect x="13" y="11" width="2" height="1"/><rect x="1" y="12" width="14" height="1"/><rect x="1" y="13" width="14" height="1"/></g><g fill="#909090"><rect x="12" y="4" width="1" height="1"/><rect x="11" y="5" width="1" height="1"/><rect x="10" y="6" width="1" height="1"/><rect x="9" y="7" width="1" height="1"/><rect x="8" y="8" width="1" height="1"/><rect x="7" y="9" width="1" height="1"/><rect x="6" y="10" width="1" height="1"/></g><g fill="#fff"><rect x="12" y="5" width="1" height="1"/><rect x="11" y="6" width="2" height="1"/><rect x="10" y="7" width="3" height="1"/><rect x="9" y="8" width="4" height="1"/><rect x="8" y="9" width="5" height="1"/><rect x="7" y="10" width="6" height="1"/><rect x="5" y="11" width="8" height="1"/></g></svg>
<div class="t" style="left:65px;top:340px;font-size:12px;letter-spacing:0;transform:scaleX(0.88);transform-origin:0 0">License</div>
<svg style="position:absolute;left:44px;top:356px" width="16" height="16" viewBox="0 0 16 16" shape-rendering="crispEdges"><g fill="#202000"><rect x="10" y="0" width="4" height="1"/><rect x="8" y="1" width="2" height="1"/><rect x="14" y="1" width="1" height="1"/><rect x="7" y="2" width="1" height="1"/><rect x="15" y="2" width="1" height="1"/><rect x="6" y="3" width="1" height="1"/><rect x="10" y="3" width="2" height="1"/><rect x="15" y="3" width="1" height="1"/><rect x="6" y="4" width="1" height="1"/><rect x="9" y="4" width="1" height="1"/><rect x="12" y="4" width="1" height="1"/><rect x="15" y="4" width="1" height="1"/><rect x="6" y="5" width="1" height="1"/><rect x="9" y="5" width="1" height="1"/><rect x="11" y="5" width="1" height="1"/><rect x="15" y="5" width="1" height="1"/><rect x="6" y="6" width="1" height="1"/><rect x="10" y="6" width="1" height="1"/><rect x="14" y="6" width="1" height="1"/><rect x="5" y="7" width="1" height="1"/><rect x="13" y="7" width="1" height="1"/><rect x="4" y="8" width="1" height="1"/><rect x="8" y="8" width="5" height="1"/><rect x="3" y="9" width="1" height="1"/><rect x="7" y="9" width="1" height="1"/><rect x="2" y="10" width="1" height="1"/><rect x="6" y="10" width="1" height="1"/><rect x="8" y="10" width="1" height="1"/><rect x="1" y="11" width="1" height="1"/><rect x="5" y="11" width="1" height="1"/><rect x="9" y="11" width="1" height="1"/><rect x="0" y="12" width="1" height="1"/><rect x="7" y="12" width="2" height="1"/><rect x="0" y="13" width="1" height="1"/><rect x="4" y="13" width="1" height="1"/><rect x="7" y="13" width="1" height="1"/><rect x="1" y="14" width="3" height="1"/><rect x="5" y="14" width="2" height="1"/></g><g fill="#f0e800"><rect x="10" y="1" width="4" height="1"/><rect x="8" y="2" width="7" height="1"/><rect x="7" y="3" width="3" height="1"/><rect x="12" y="3" width="3" height="1"/><rect x="7" y="4" width="2" height="1"/><rect x="13" y="4" width="2" height="1"/><rect x="7" y="5" width="2" height="1"/><rect x="12" y="5" width="3" height="1"/><rect x="7" y="6" width="3" height="1"/><rect x="11" y="6" width="3" height="1"/><rect x="6" y="7" width="7" height="1"/><rect x="5" y="8" width="3" height="1"/><rect x="4" y="9" width="3" height="1"/><rect x="3" y="10" width="3" height="1"/><rect x="7" y="10" width="1" height="1"/><rect x="2" y="11" width="3" height="1"/><rect x="6" y="11" width="3" height="1"/><rect x="1" y="12" width="6" height="1"/><rect x="1" y="13" width="3" height="1"/><rect x="5" y="13" width="2" height="1"/></g><g fill="#fff"><rect x="10" y="4" width="2" height="1"/><rect x="10" y="5" width="1" height="1"/></g></svg>
<div class="t" style="left:65px;top:356px;font-size:12px;letter-spacing:0;transform:scaleX(0.88);transform-origin:0 0">Security</div>
<div style="position:absolute;left:230px;top:52px;width:417px;height:431px;overflow:hidden">
<div style="position:absolute;left:0px;top:0;width:83px;height:17px;background:#ece9d8;box-sizing:border-box;border-left:1px solid #fff;border-top:1px solid #fff;"><div style="position:absolute;left:-1px;bottom:0;width:83px;height:1px;background:#000"></div><div style="position:absolute;left:0;bottom:1px;width:82px;height:1px;background:#aca899"></div><div style="position:absolute;right:0;top:-1px;width:1px;height:17px;background:#000"></div><div style="position:absolute;right:1px;top:0;width:1px;height:15px;background:#aca899"></div></div>
<div class="t" style="left:3px;top:0px;">Option</div>
<div style="position:absolute;left:83px;top:0;width:128px;height:17px;background:#ece9d8;box-sizing:border-box;border-left:1px solid #fff;border-top:1px solid #fff;"><div style="position:absolute;left:-1px;bottom:0;width:128px;height:1px;background:#000"></div><div style="position:absolute;left:0;bottom:1px;width:127px;height:1px;background:#aca899"></div><div style="position:absolute;right:0;top:-1px;width:1px;height:17px;background:#000"></div><div style="position:absolute;right:1px;top:0;width:1px;height:15px;background:#aca899"></div></div>
<div class="t" style="left:86px;top:0px;">Value</div>
<div style="position:absolute;left:211px;top:0;width:300px;height:17px;background:#ece9d8;box-sizing:border-box;border-left:1px solid #fff;border-top:1px solid #fff;"><div style="position:absolute;left:-1px;bottom:0;width:300px;height:1px;background:#000"></div><div style="position:absolute;left:0;bottom:1px;width:299px;height:1px;background:#aca899"></div></div>
<div class="t" style="left:214px;top:0px;">Details</div>
<div class="t" style="left:3px;top:17px;line-height:17px">Audit Field is</div>
<div class="t" style="left:214px;top:17px;line-height:17px;letter-spacing:0">Specify whether the 'Reason for Modification' is required</div>
<div class="t" style="left:3px;top:34px;line-height:17px">Change</div>
<div class="t" style="left:86px;top:34px;line-height:17px">40</div>
<div class="t" style="left:214px;top:34px;line-height:17px;letter-spacing:0">Specify the change in kilograms required to trigger</div>
<div class="t" style="left:3px;top:51px;line-height:17px">Change</div>
<div class="t" style="left:214px;top:51px;line-height:17px;letter-spacing:0">Specify the change in kilograms required to trigger</div>
<div class="t" style="left:3px;top:68px;line-height:17px">Change</div>
<div class="t" style="left:214px;top:68px;line-height:17px;letter-spacing:0">Specify the change in kilograms required to trigger</div>
<div class="t" style="left:3px;top:85px;line-height:17px">Change</div>
<div class="t" style="left:214px;top:85px;line-height:17px;letter-spacing:0">Specify the change in kilograms required to trigger</div>
<div class="t" style="left:3px;top:102px;line-height:17px">Change</div>
<div class="t" style="left:214px;top:102px;line-height:17px;letter-spacing:0">Specify the change in kilograms required to trigger</div>
<div class="t" style="left:3px;top:119px;line-height:17px">Change</div>
<div class="t" style="left:214px;top:119px;line-height:17px;letter-spacing:0">Specify the change in kilograms required to trigger</div>
<div class="t" style="left:3px;top:136px;line-height:17px">Change</div>
<div class="t" style="left:214px;top:136px;line-height:17px;letter-spacing:0">Specify the change in litres required to trigger</div>
<div class="t" style="left:3px;top:153px;line-height:17px">Interface Field</div>
<div class="t" style="left:86px;top:153px;line-height:17px">Alias</div>
<div class="t" style="left:214px;top:153px;line-height:17px;letter-spacing:0">Specify an interface field that contains the</div>
<div class="t" style="left:3px;top:170px;line-height:17px">Interface Field</div>
<div class="t" style="left:214px;top:170px;line-height:17px;letter-spacing:0">Specify an interface field from which to get</div>
<div class="t" style="left:3px;top:187px;line-height:17px">Interface Field</div>
<div class="t" style="left:86px;top:187px;line-height:17px">Product_Code</div>
<div class="t" style="left:214px;top:187px;line-height:17px;letter-spacing:0">Specify an interface field used to select the</div>
<div class="t" style="left:3px;top:204px;line-height:17px">Rounding for</div>
<div class="t" style="left:86px;top:204px;line-height:17px">0.00</div>
<div class="t" style="left:214px;top:204px;line-height:17px;letter-spacing:0">Specify the rounding to be used for additives</div>
<div class="t" style="left:3px;top:221px;line-height:17px">Rounding for</div>
<div class="t" style="left:86px;top:221px;line-height:17px">10</div>
<div class="t" style="left:214px;top:221px;line-height:17px;letter-spacing:0">Specify the rounding to be used for aggregates</div>
<div class="t" style="left:3px;top:238px;line-height:17px">Rounding for</div>
<div class="t" style="left:86px;top:238px;line-height:17px">3</div>
<div class="t" style="left:214px;top:238px;line-height:17px;letter-spacing:0">Specify the rounding to be used for cement</div>
<div class="t" style="left:3px;top:255px;line-height:17px">Rounding for</div>
<div class="t" style="left:86px;top:255px;line-height:17px">0</div>
<div class="t" style="left:214px;top:255px;line-height:17px;letter-spacing:0">Specify the rounding to be used for water</div>
<div style="position:absolute;left:0;top:414px;width:417px;height:17px;background-color:#fff;background-image:repeating-conic-gradient(#ece9d8 0 25%,#fff 0 50%);background-size:2px 2px"></div>
<div style="position:absolute;left:0px;top:414px;width:15px;height:15px;border:1px solid;border-color:#f1efe2 #716f64 #716f64 #f1efe2;background:#ece9d8"><div style="position:absolute;left:0;top:0;width:13px;height:13px;border:1px solid;border-color:#fff #aca899 #aca899 #fff;"></div><svg style="position:absolute;left:-1px;top:-1px" width="17" height="17" shape-rendering="crispEdges"><rect x="6" y="8" width="1" height="1"/><rect x="7" y="7" width="1" height="3"/><rect x="8" y="6" width="1" height="5"/><rect x="9" y="5" width="1" height="7"/></svg></div>
<div style="position:absolute;left:17px;top:414px;width:15px;height:15px;border:1px solid;border-color:#f1efe2 #716f64 #716f64 #f1efe2;background:#ece9d8"><div style="position:absolute;left:0;top:0;width:13px;height:13px;border:1px solid;border-color:#fff #aca899 #aca899 #fff;"></div></div>
<div style="position:absolute;left:400px;top:414px;width:15px;height:15px;border:1px solid;border-color:#f1efe2 #716f64 #716f64 #f1efe2;background:#ece9d8"><div style="position:absolute;left:0;top:0;width:13px;height:13px;border:1px solid;border-color:#fff #aca899 #aca899 #fff;"></div><svg style="position:absolute;left:-1px;top:-1px" width="17" height="17" shape-rendering="crispEdges"><rect x="7" y="5" width="1" height="7"/><rect x="8" y="6" width="1" height="5"/><rect x="9" y="7" width="1" height="3"/><rect x="10" y="8" width="1" height="1"/></svg></div>
</div>
<div style="position:absolute;left:4px;top:487px;width:333px;height:18px;border-style:solid;border-width:1px;border-color:#aca899 #fff #fff #aca899;box-sizing:border-box;width:334px;height:19px"></div>
<div style="position:absolute;left:4px;top:505px;width:334px;height:1px;background:#fff"></div>
<svg style="position:absolute;left:0;top:0" width="653" height="510" shape-rendering="crispEdges"><rect x="637" y="504" width="1" height="1" fill="#fff"/><rect x="638" y="503" width="1" height="1" fill="#fff"/><rect x="639" y="502" width="1" height="1" fill="#fff"/><rect x="640" y="501" width="1" height="1" fill="#fff"/><rect x="641" y="500" width="1" height="1" fill="#fff"/><rect x="642" y="499" width="1" height="1" fill="#fff"/><rect x="643" y="498" width="1" height="1" fill="#fff"/><rect x="644" y="497" width="1" height="1" fill="#fff"/><rect x="645" y="496" width="1" height="1" fill="#fff"/><rect x="646" y="495" width="1" height="1" fill="#fff"/><rect x="647" y="494" width="1" height="1" fill="#fff"/><rect x="648" y="493" width="1" height="1" fill="#fff"/><rect x="638" y="504" width="1" height="1" fill="#aca899"/><rect x="639" y="503" width="1" height="1" fill="#aca899"/><rect x="640" y="502" width="1" height="1" fill="#aca899"/><rect x="641" y="501" width="1" height="1" fill="#aca899"/><rect x="642" y="500" width="1" height="1" fill="#aca899"/><rect x="643" y="499" width="1" height="1" fill="#aca899"/><rect x="644" y="498" width="1" height="1" fill="#aca899"/><rect x="645" y="497" width="1" height="1" fill="#aca899"/><rect x="646" y="496" width="1" height="1" fill="#aca899"/><rect x="647" y="495" width="1" height="1" fill="#aca899"/><rect x="648" y="494" width="1" height="1" fill="#aca899"/><rect x="639" y="504" width="1" height="1" fill="#aca899"/><rect x="640" y="503" width="1" height="1" fill="#aca899"/><rect x="641" y="502" width="1" height="1" fill="#aca899"/><rect x="642" y="501" width="1" height="1" fill="#aca899"/><rect x="643" y="500" width="1" height="1" fill="#aca899"/><rect x="644" y="499" width="1" height="1" fill="#aca899"/><rect x="645" y="498" width="1" height="1" fill="#aca899"/><rect x="646" y="497" width="1" height="1" fill="#aca899"/><rect x="647" y="496" width="1" height="1" fill="#aca899"/><rect x="648" y="495" width="1" height="1" fill="#aca899"/><rect x="641" y="504" width="1" height="1" fill="#fff"/><rect x="642" y="503" width="1" height="1" fill="#fff"/><rect x="643" y="502" width="1" height="1" fill="#fff"/><rect x="644" y="501" width="1" height="1" fill="#fff"/><rect x="645" y="500" width="1" height="1" fill="#fff"/><rect x="646" y="499" width="1" height="1" fill="#fff"/><rect x="647" y="498" width="1" height="1" fill="#fff"/><rect x="648" y="497" width="1" height="1" fill="#fff"/><rect x="642" y="504" width="1" height="1" fill="#aca899"/><rect x="643" y="503" width="1" height="1" fill="#aca899"/><rect x="644" y="502" width="1" height="1" fill="#aca899"/><rect x="645" y="501" width="1" height="1" fill="#aca899"/><rect x="646" y="500" width="1" height="1" fill="#aca899"/><rect x="647" y="499" width="1" height="1" fill="#aca899"/><rect x="648" y="498" width="1" height="1" fill="#aca899"/><rect x="643" y="504" width="1" height="1" fill="#aca899"/><rect x="644" y="503" width="1" height="1" fill="#aca899"/><rect x="645" y="502" width="1" height="1" fill="#aca899"/><rect x="646" y="501" width="1" height="1" fill="#aca899"/><rect x="647" y="500" width="1" height="1" fill="#aca899"/><rect x="648" y="499" width="1" height="1" fill="#aca899"/><rect x="645" y="504" width="1" height="1" fill="#fff"/><rect x="646" y="503" width="1" height="1" fill="#fff"/><rect x="647" y="502" width="1" height="1" fill="#fff"/><rect x="648" y="501" width="1" height="1" fill="#fff"/><rect x="646" y="504" width="1" height="1" fill="#aca899"/><rect x="647" y="503" width="1" height="1" fill="#aca899"/><rect x="648" y="502" width="1" height="1" fill="#aca899"/><rect x="647" y="504" width="1" height="1" fill="#aca899"/><rect x="648" y="503" width="1" height="1" fill="#aca899"/></svg>
</div></body></html>
